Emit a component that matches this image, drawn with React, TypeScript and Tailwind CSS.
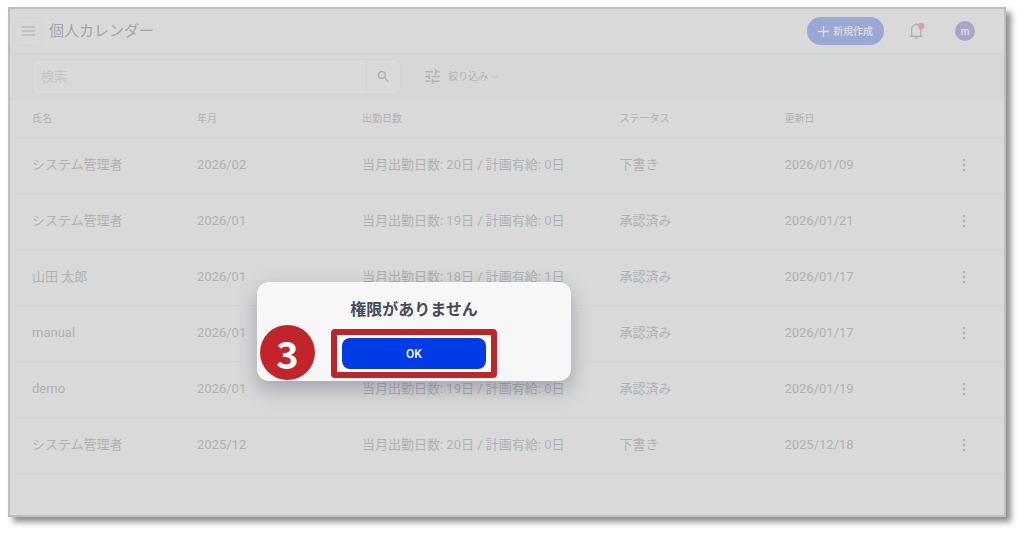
import { useState } from 'react';
import { MdSearch, MdTune } from 'react-icons/md';

const rows = [
  { name: 'システム管理者', month: '2026/02', days: '当月出勤日数: 20日 / 計画有給: 0日', status: '下書き', updated: '2026/01/09' },
  { name: 'システム管理者', month: '2026/01', days: '当月出勤日数: 19日 / 計画有給: 0日', status: '承認済み', updated: '2026/01/21' },
  { name: '山田 太郎', month: '2026/01', days: '当月出勤日数: 18日 / 計画有給: 1日', status: '承認済み', updated: '2026/01/17' },
  { name: 'manual', month: '2026/01', days: '当月出勤日数: 19日 / 計画有給: 0日', status: '承認済み', updated: '2026/01/17' },
  { name: 'demo', month: '2026/01', days: '当月出勤日数: 19日 / 計画有給: 0日', status: '承認済み', updated: '2026/01/19' },
  { name: 'システム管理者', month: '2025/12', days: '当月出勤日数: 20日 / 計画有給: 0日', status: '下書き', updated: '2025/12/18' },
];

const Header = () => (
  <header className="flex h-[45px] items-center border-b border-[#d2d5d4] pl-1 pr-[29px]">
    <button
      type="button"
      aria-label="メニュー"
      className="flex h-[29px] w-[29px] items-center justify-center rounded-md border border-[#d5d5d6]"
    >
      <svg width="13" height="10" viewBox="0 0 13 10" stroke="#aaabad" strokeWidth="1.1">
        <path d="M0 1h13M0 5h13M0 9h13" />
      </svg>
    </button>
    <h1 className="ml-1.5 text-[15px] leading-5 text-[#a4a5a8]">個人カレンダー</h1>
    <button
      type="button"
      className="ml-auto flex h-7 w-[77px] items-center justify-center gap-1 rounded-full bg-[#9aa8d5] text-[10px] font-medium text-[#dcdde1]"
    >
      <svg width="11" height="11" viewBox="0 0 11 11" stroke="currentColor" strokeWidth="1.4">
        <path d="M5.5 0v11M0 5.5h11" />
      </svg>
      新規作成
    </button>
    <button type="button" aria-label="通知" className="ml-[25px]">
      <svg width="16" height="18" viewBox="0 0 16 18" fill="none">
        <path d="M0.8 14.3h12.8M2.7 14.2V7.2a4.5 4.5 0 0 1 9 0v7M7.2 2.6V1.2" stroke="#aaabac" strokeWidth="1.2" />
        <path d="M5.8 15.4h2.8a1.4 1.4 0 0 1-2.8 0z" fill="#aaabac" />
        <circle cx="12.3" cy="4" r="3.2" fill="#dea09c" />
      </svg>
    </button>
    <div className="ml-[30px] flex h-5 w-5 items-center justify-center rounded-full bg-[#aaa5c6] text-[10px] font-medium text-[#dfdee5]">
      m
    </div>
  </header>
);

const SearchBar = () => (
  <div className="flex h-[46px] items-center border-b border-[#d2d5d4] bg-[#d5d8d7] pl-[22px]">
    <div className="flex h-9 w-[38%] rounded-md border border-[#d1d4d4] bg-[#d9d9d9]">
      <input
        type="text"
        aria-label="検索"
        placeholder="検索"
        className="min-w-0 flex-1 bg-transparent px-2 text-[13px] text-[#a4a5a8] placeholder:text-[#c3c4c4] focus:outline-none"
      />
      <button
        type="button"
        aria-label="検索する"
        className="flex w-[34px] items-center justify-center border-l border-[#d1d4d4] text-[#aaabac]"
      >
        <MdSearch size={15} />
      </button>
    </div>
    <button type="button" className="ml-[22px] flex items-center text-[10px] text-[#b2b3b4]">
      <MdTune size={19} />
      <span className="ml-1.5">絞り込み</span>
      <svg className="ml-1" width="7" height="4" viewBox="0 0 7 4" fill="none" stroke="#bfc0c0">
        <path d="M0.5 0.5l3 2.6 3-2.6" />
      </svg>
    </button>
  </div>
);

const CalendarTable = () => (
  <table className="w-full table-fixed text-left text-[#b0b1b3]">
    <colgroup>
      <col className="w-[16.6%]" />
      <col className="w-[16.6%]" />
      <col className="w-[25.9%]" />
      <col className="w-[16.6%]" />
      <col className="w-[16.6%]" />
      <col />
    </colgroup>
    <thead>
      <tr className="h-[37px] border-b border-[#d4d5d5] text-[10px]">
        <th className="pl-[22px] font-normal">氏名</th>
        <th className="pl-[22px] font-normal">年月</th>
        <th className="pl-[22px] font-normal">出勤日数</th>
        <th className="pl-[22px] font-normal">ステータス</th>
        <th className="pl-[22px] font-normal">更新日</th>
        <th aria-label="操作" />
      </tr>
    </thead>
    <tbody>
      {rows.map((row, i) => (
        <tr key={i} className="h-14 border-b border-[#d4d5d5] text-[13px] leading-5">
          <td className="pl-[22px]">{row.name}</td>
          <td className="pl-[22px]">{row.month}</td>
          <td className="whitespace-nowrap pl-[22px]">{row.days}</td>
          <td className="pl-[22px]">{row.status}</td>
          <td className="pl-[22px]">{row.updated}</td>
          <td className="pr-1">
            <button type="button" aria-label="操作メニュー" className="mx-auto block">
              <svg width="4" height="14" viewBox="0 0 4 14" fill="currentColor">
                <circle cx="2" cy="2" r="1.2" />
                <circle cx="2" cy="7" r="1.2" />
                <circle cx="2" cy="12" r="1.2" />
              </svg>
            </button>
          </td>
        </tr>
      ))}
    </tbody>
  </table>
);

const App = () => {
  const [open, setOpen] = useState(true);

  return (
    <div className="bg-white pb-[18px] pl-2 pr-[18px] pt-[7px] font-['Roboto','Noto_Sans_CJK_JP',sans-serif]">
      <div className="relative border-2 border-[#bfbfbf] bg-[#d9d9d9] pb-[41px] shadow-[5px_5px_6px_rgba(0,0,0,0.45)]">
        <Header />
        <SearchBar />
        <CalendarTable />

        {open && (
          <div
            role="alertdialog"
            aria-labelledby="dialog-title"
            className="absolute left-[247px] top-[273px] flex h-[99px] w-[314px] flex-col items-center rounded-xl bg-[#f7f7f7] pt-[18px] shadow-[0_8px_20px_rgba(60,60,90,0.35)]"
          >
            <h2 id="dialog-title" className="text-base leading-5 font-bold text-[#464b57]">
              権限がありません
            </h2>
            {/* step marker */}
            <div className="absolute bottom-px left-[3px] flex h-[55px] w-[55px] items-center justify-center rounded-full bg-[#c22529] font-['Noto_Sans_CJK_JP',sans-serif] text-[38px] leading-none font-bold text-white">
              3
            </div>
            {/* red frame round the button */}
            <div className="mt-[9px] rounded border-6 border-[#c22529] bg-white px-[5px] py-[3px]">
              <button
                type="button"
                onClick={() => setOpen(false)}
                className="block h-[31px] w-36 rounded-lg bg-[#003ce6] text-[12px] font-medium text-white"
              >
                OK
              </button>
            </div>
          </div>
        )}
      </div>
    </div>
  );
};

export default App;
